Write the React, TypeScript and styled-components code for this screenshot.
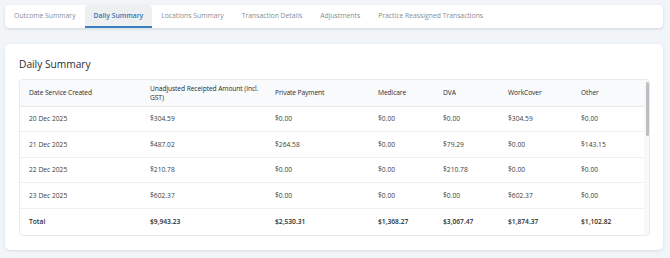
import styled, { createGlobalStyle } from 'styled-components'

interface IRow {
  date: string
  unadjusted: string
  privatePayment: string
  medicare: string
  dva: string
  workCover: string
  other: string
}

const GlobalStyle = createGlobalStyle`
  body {
    margin: 0;
    background: #f1f5f8;
    font-family: "Open Sans", "Noto Sans", sans-serif;
  }
`

const tabs = [
  'Outcome Summary',
  'Daily Summary',
  'Locations Summary',
  'Transaction Details',
  'Adjustments',
  'Practice Reassigned Transactions',
]

const rows: IRow[] = [
  { date: '20 Dec 2025', unadjusted: '$304.59', privatePayment: '$0.00', medicare: '$0.00', dva: '$0.00', workCover: '$304.59', other: '$0.00' },
  { date: '21 Dec 2025', unadjusted: '$487.02', privatePayment: '$264.58', medicare: '$0.00', dva: '$79.29', workCover: '$0.00', other: '$143.15' },
  { date: '22 Dec 2025', unadjusted: '$210.78', privatePayment: '$0.00', medicare: '$0.00', dva: '$210.78', workCover: '$0.00', other: '$0.00' },
  { date: '23 Dec 2025', unadjusted: '$602.37', privatePayment: '$0.00', medicare: '$0.00', dva: '$0.00', workCover: '$602.37', other: '$0.00' },
]

const totals: IRow = {
  date: 'Total',
  unadjusted: '$9,943.23',
  privatePayment: '$2,530.31',
  medicare: '$1,368.27',
  dva: '$3,067.47',
  workCover: '$1,874.37',
  other: '$1,102.82',
}

const columns: { key: keyof IRow; label: string; width: number }[] = [
  { key: 'date', label: 'Date Service Created', width: 121 },
  { key: 'unadjusted', label: 'Unadjusted Receipted Amount (Incl. GST)', width: 125 },
  { key: 'privatePayment', label: 'Private Payment', width: 103 },
  { key: 'medicare', label: 'Medicare', width: 65 },
  { key: 'dva', label: 'DVA', width: 65 },
  { key: 'workCover', label: 'WorkCover', width: 73 },
  { key: 'other', label: 'Other', width: 72 },
]

const Page = styled.div`
  padding: 5px 7px 8px 5px;
  display: flex;
  flex-direction: column;
  gap: 16px;
`

const TabBar = styled.nav`
  display: flex;
  background: #fff;
  border-radius: 4px;
  box-shadow: 0 1px 3px rgba(30, 50, 80, 0.16);
  height: 23px;
`

const Tab = styled.div<{ $active?: boolean }>`
  display: flex;
  align-items: center;
  padding: 0 9px;
  font-size: 6.8px;
  color: ${(p) => (p.$active ? '#2f78b5' : '#8a8d91')};
  font-weight: ${(p) => (p.$active ? 600 : 400)};
  background: ${(p) => (p.$active ? '#eeeff0' : 'transparent')};
  border-bottom: 2px solid ${(p) => (p.$active ? '#3a80bf' : 'transparent')};
  border-radius: ${(p) => (p.$active ? '4px 4px 0 0' : '0')};
  white-space: nowrap;
`

const Card = styled.section`
  background: #fff;
  border-radius: 5px;
  box-shadow: 0 1px 3px rgba(30, 50, 80, 0.12);
  padding: 14px 13px 14px 14px;
`

const Heading = styled.h2`
  margin: 0 0 8px;
  font-size: 10.2px;
  font-weight: 500;
  color: #2b2d30;
  line-height: 13px;
`

const TableFrame = styled.div`
  display: flex;
  border: 1px solid #e7e9ec;
  border-radius: 4px;
  background: #f8f8f9;
  overflow: hidden;
`

const Table = styled.table`
  width: 624px;
  border-collapse: collapse;
  table-layout: fixed;
  background: #fff;
`

const ScrollTrack = styled.div`
  flex: 1;
  padding: 2px 2px;
  display: flex;
  justify-content: center;
`

const ScrollThumb = styled.div`
  width: 3px;
  height: 54px;
  background: #bdbdc2;
  border-radius: 2px;
`

const HeadCell = styled.th<{ $w: number }>`
  width: ${(p) => p.$w}px;
  height: 26px;
  box-sizing: border-box;
  padding: 0 2px 0 9px;
  text-align: left;
  font-size: 6.7px;
  letter-spacing: -0.1px;
  font-weight: 500;
  color: #2b2d30;
  line-height: 9px;
  background: #f9fafb;
  border-bottom: 1px solid #e6e8eb;
`

const Cell = styled.td<{ $total?: boolean; $h?: number }>`
  height: ${(p) => p.$h ?? 25.5}px;
  box-sizing: border-box;
  padding: 0 9px;
  font-size: 6.7px;
  color: ${(p) => (p.$total ? '#2b2d30' : '#3a3c40')};
  font-weight: ${(p) => (p.$total ? 600 : 400)};
  border-bottom: ${(p) => (p.$total ? 'none' : '1px solid #eef0f2')};
  white-space: nowrap;
`

const App = () => {
  return (
    <>
      <GlobalStyle />
      <Page>
        <TabBar>
          {tabs.map((t) => (
            <Tab key={t} $active={t === 'Daily Summary'}>
              {t}
            </Tab>
          ))}
        </TabBar>
        <Card>
          <Heading>Daily Summary</Heading>
          <TableFrame>
            <Table>
              <thead>
                <tr>
                  {columns.map((c) => (
                    <HeadCell key={c.key} $w={c.width}>
                      {c.label}
                    </HeadCell>
                  ))}
                </tr>
              </thead>
              <tbody>
                {rows.map((r) => (
                  <tr key={r.date}>
                    {columns.map((c) => (
                      <Cell key={c.key}>{r[c.key]}</Cell>
                    ))}
                  </tr>
                ))}
              </tbody>
              <tfoot>
                <tr>
                  {columns.map((c) => (
                    <Cell key={c.key} $total $h={27}>
                      {totals[c.key]}
                    </Cell>
                  ))}
                </tr>
              </tfoot>
            </Table>
            <ScrollTrack>
              <ScrollThumb />
            </ScrollTrack>
          </TableFrame>
        </Card>
      </Page>
    </>
  )
}

export default App
